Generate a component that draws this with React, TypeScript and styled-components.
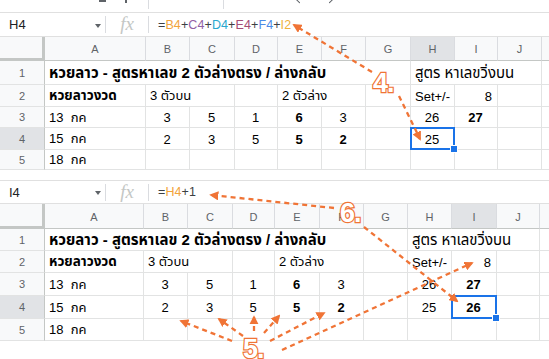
import React from "react";
import styled, { createGlobalStyle } from "styled-components";
import { ArrowLeft, ArrowRight } from "lucide-react";

const GlobalStyle = createGlobalStyle`
  html, body { margin: 0; padding: 0; background: #ffffff; }
  body { font-family: "Liberation Sans", Arial, "Noto Sans Thai", "Noto Sans", sans-serif; }
`;

const ORANGE = "#f07436";
const FONT = `"Liberation Sans", Arial, "Noto Sans Thai", "Noto Sans", sans-serif`;

const Page = styled.div`
  position: relative;
  width: 549px;
  height: 359px;
  overflow: hidden;
  background: #fff;
  display: flex;
  flex-direction: column;
`;

const Toolbar = styled.div`
  height: 12px;
  border-bottom: 1px solid #e0e0e0;
  display: flex;
  align-items: flex-start;
  overflow: hidden;
  color: #5f6368;
  flex: none;
`;

const ToolSlot = styled.div<{ $w: number }>`
  width: ${(p) => p.$w}px;
  flex: none;
  display: flex;
  justify-content: center;
`;

const ToolStub = styled.div<{ $w: number; $h: number }>`
  width: ${(p) => p.$w}px;
  height: ${(p) => p.$h}px;
  background: #5f6368;
`;

const ToolSep = styled.div`
  width: 1px;
  height: 9px;
  background: #dadce0;
  flex: none;
`;

const ToolArrow = styled.div`
  margin-top: -6px;
  display: flex;
`;

const FormulaBar = styled.div<{ $top?: boolean; $h: number }>`
  height: ${(p) => p.$h}px;
  box-sizing: border-box;
  border-top: ${(p) => (p.$top ? "1px solid #e0e0e0" : "none")};
  border-bottom: 1px solid #e0e0e0;
  display: flex;
  align-items: center;
  font-family: ${FONT};
  flex: none;
`;

const NameBox = styled.div`
  width: 105px;
  box-sizing: border-box;
  padding: 0 4px 0 9px;
  display: flex;
  align-items: center;
  justify-content: space-between;
  font-size: 13px;
  color: #202124;
`;

const Caret = styled.span`
  width: 0;
  height: 0;
  border-left: 3.5px solid transparent;
  border-right: 3.5px solid transparent;
  border-top: 4px solid #5f6368;
  margin-top: 2px;
`;

const BarSep = styled.div`
  width: 1px;
  height: 17px;
  background: #dadce0;
  flex: none;
`;

const Fx = styled.div`
  width: 42px;
  text-align: center;
  font-family: "Liberation Serif", "DejaVu Serif", serif;
  font-style: italic;
  font-size: 19px;
  color: #c4c7c5;
  line-height: 1;
  margin-top: -2px;
`;

const FormulaText = styled.div`
  padding-left: 9px;
  font-size: 12.5px;
  color: #3c4043;
  letter-spacing: 0.1px;
`;

const Ref = styled.span<{ $c: string }>`
  color: ${(p) => p.$c};
`;

const Grid = styled.div<{ $cols: string; $rows: string }>`
  display: grid;
  grid-template-columns: ${(p) => p.$cols};
  grid-template-rows: ${(p) => p.$rows};
  font-family: ${FONT};
  flex: none;
`;

const Corner = styled.div`
  background: #f8f9fa;
  box-shadow: inset -3px -3px 0 #c4c7c5;
`;

const ColHead = styled.div<{ $sel?: boolean }>`
  background: ${(p) => (p.$sel ? "#e1e3e6" : "#f8f9fa")};
  border-right: 1px solid #dadce0;
  border-bottom: 1px solid #c4c7c5;
  display: flex;
  align-items: center;
  justify-content: center;
  font-size: 11px;
  color: #5f6368;
  padding-top: 1px;
  box-sizing: border-box;
`;

const RowHead = styled.div<{ $sel?: boolean }>`
  background: ${(p) => (p.$sel ? "#e1e3e6" : "#f8f9fa")};
  border-right: 1px solid #c4c7c5;
  border-bottom: 1px solid #e2e3e3;
  display: flex;
  align-items: center;
  justify-content: center;
  font-size: 11px;
  color: #5f6368;
  box-sizing: border-box;
`;

const Cell = styled.div<{
  $span: number;
  $align: "left" | "center" | "right";
  $bold?: boolean;
  $size: number;
  $sel?: boolean;
}>`
  grid-column: span ${(p) => p.$span};
  position: relative;
  border-right: 1px solid #e2e3e3;
  border-bottom: 1px solid #e2e3e3;
  box-sizing: border-box;
  display: flex;
  align-items: center;
  justify-content: ${(p) =>
    p.$align === "center" ? "center" : p.$align === "right" ? "flex-end" : "flex-start"};
  padding: 1px 5px 0 4px;
  font-size: ${(p) => p.$size}px;
  font-weight: ${(p) => (p.$bold ? 700 : 400)};
  color: #000;
  white-space: pre;
  overflow: visible;
  z-index: ${(p) => (p.$sel ? 2 : 0)};

  ${(p) =>
    p.$sel &&
    `
    &::after {
      content: "";
      position: absolute;
      left: -1px; top: -1px; right: -1px; bottom: -1px;
      border: 2px solid #1a73e8;
    }
    &::before {
      content: "";
      position: absolute;
      right: -4px; bottom: -4px;
      width: 6px; height: 6px;
      background: #1a73e8;
      border: 1px solid #fff;
      z-index: 3;
    }
  `}
`;

const Gap = styled.div`
  height: 10px;
  flex: none;
`;

const Overlay = styled.svg`
  position: absolute;
  left: 0;
  top: 0;
  pointer-events: none;
  z-index: 10;
`;

const Badge = styled.span<{ $x: number; $y: number }>`
  position: absolute;
  left: ${(p) => p.$x}px;
  top: ${(p) => p.$y}px;
  font-family: "Liberation Sans", Arial, sans-serif;
  font-weight: 700;
  font-size: 27px;
  line-height: 27px;
  color: #fff;
  -webkit-text-stroke: 2.4px ${ORANGE};
  paint-order: stroke fill;
  letter-spacing: -1px;
  z-index: 11;
  pointer-events: none;
`;

type CellSpec = {
  t?: string;
  span?: number;
  align?: "left" | "center" | "right";
  bold?: boolean;
  size?: number;
  sel?: boolean;
};

const TITLE = "หวยลาว - สูตรหาเลข 2 ตัวล่างตรง / ล่างกลับ";

const buildRows = (selCol: "H" | "I"): CellSpec[][] => [
  [
    { t: TITLE, span: 7, bold: true, size: 15 },
    { t: "สูตร หาเลขวิ่งบน", span: 3, size: 15 },
    {},
  ],
  [
    { t: "หวยลาวงวด", bold: true, size: 13.5 },
    { t: "3 ตัวบน", span: 2 },
    {},
    { t: "2 ตัวล่าง", span: 2 },
    {},
    { t: "Set+/-" },
    { t: "8", align: "right" },
    {},
    {},
  ],
  [
    { t: "13  กค" },
    { t: "3", align: "center" },
    { t: "5", align: "center" },
    { t: "1", align: "center" },
    { t: "6", align: "center", bold: true },
    { t: "3", align: "center" },
    {},
    { t: "26", align: "center" },
    { t: "27", align: "center", bold: true },
    {},
    {},
  ],
  [
    { t: "15  กค" },
    { t: "2", align: "center" },
    { t: "3", align: "center" },
    { t: "5", align: "center" },
    { t: "5", align: "center", bold: true },
    { t: "2", align: "center", bold: true },
    {},
    { t: "25", align: "center", sel: selCol === "H" },
    selCol === "I"
      ? { t: "26", align: "center", bold: true, sel: true }
      : {},
    {},
    {},
  ],
  [{ t: "18  กค" }, {}, {}, {}, {}, {}, {}, {}, {}, {}, {}],
];

const LETTERS = ["A", "B", "C", "D", "E", "F", "G", "H", "I", "J", ""];

type SheetProps = {
  cols: number[];
  rows: number[];
  selCol: "H" | "I";
};

const Sheet: React.FC<SheetProps> = ({ cols, rows, selCol }) => {
  const data = buildRows(selCol);
  const colTpl = cols.map((c) => `${c}px`).join(" ") + " 1fr";
  const rowTpl = rows.map((r) => `${r}px`).join(" ");
  return (
    <Grid $cols={colTpl} $rows={rowTpl}>
      <Corner />
      {LETTERS.map((l, i) => (
        <ColHead key={`h${i}`} $sel={l === selCol}>
          {l}
        </ColHead>
      ))}
      {data.map((row, ri) => (
        <React.Fragment key={`r${ri}`}>
          <RowHead $sel={ri === 3}>{ri + 1}</RowHead>
          {row.map((c, ci) => (
            <Cell
              key={`c${ri}-${ci}`}
              $span={c.span ?? 1}
              $align={c.align ?? "left"}
              $bold={c.bold}
              $size={c.size ?? 13}
              $sel={c.sel}
            >
              {c.t ?? ""}
            </Cell>
          ))}
        </React.Fragment>
      ))}
    </Grid>
  );
};

const Arrows: React.FC = () => {
  const lines: [number, number, number, number][] = [
    [372, 72, 294, 25],
    [399, 96, 420, 139],
    [334, 208, 211, 195],
    [364, 227, 457, 301],
    [232, 341, 181, 321],
    [243, 336, 219, 319],
    [254, 331, 254, 317],
    [264, 333, 279, 316],
    [270, 341, 324, 313],
    [282, 350, 472, 263],
  ];
  return (
    <Overlay width={549} height={359} viewBox="0 0 549 359">
      <defs>
        <marker
          id="ah"
          viewBox="0 0 10 10"
          refX="8"
          refY="5"
          markerWidth="4"
          markerHeight="4"
          orient="auto"
        >
          <path d="M0,0 L10,5 L0,10 z" fill={ORANGE} />
        </marker>
      </defs>
      {lines.map(([x1, y1, x2, y2], i) => (
        <line
          key={i}
          x1={x1}
          y1={y1}
          x2={x2}
          y2={y2}
          stroke={ORANGE}
          strokeWidth={2.3}
          strokeDasharray="5 4"
          markerEnd="url(#ah)"
        />
      ))}
    </Overlay>
  );
};

export default function App() {
  return (
    <>
      <GlobalStyle />
      <Page>
        <Toolbar>
          <ToolSlot $w={96} />
          <ToolSlot $w={12}>
            <ToolStub $w={7} $h={2} />
          </ToolSlot>
          <ToolSlot $w={14} />
          <ToolSlot $w={8}>
            <ToolStub $w={2} $h={3} />
          </ToolSlot>
          <ToolSlot $w={18} />
          <ToolSep />
          <ToolSlot $w={74} />
          <ToolSep />
          <ToolSlot $w={70} />
          <ToolArrow>
            <ArrowLeft size={11} strokeWidth={2.2} />
          </ToolArrow>
          <ToolSlot $w={19} />
          <ToolArrow>
            <ArrowRight size={11} strokeWidth={2.2} />
          </ToolArrow>
        </Toolbar>
        <FormulaBar $h={24}>
          <NameBox>
            <span>H4</span>
            <Caret />
          </NameBox>
          <BarSep />
          <Fx>fx</Fx>
          <BarSep />
          <FormulaText>
            =<Ref $c="#f2a33a">B4</Ref>+<Ref $c="#9261a6">C4</Ref>+
            <Ref $c="#2aa8cf">D4</Ref>+<Ref $c="#a64c74">E4</Ref>+
            <Ref $c="#4b8ae6">F4</Ref>+<Ref $c="#eeb23a">I2</Ref>
          </FormulaText>
        </FormulaBar>
        <Sheet
          cols={[45, 101, 44, 45, 43, 44, 44, 45, 44, 43, 44]}
          rows={[24, 24, 22, 21, 22, 20]}
          selCol="H"
        />
        <Gap />
        <FormulaBar $top $h={24}>
          <NameBox>
            <span>I4</span>
            <Caret />
          </NameBox>
          <BarSep />
          <Fx>fx</Fx>
          <BarSep />
          <FormulaText>
            =<Ref $c="#f2a33a">H4</Ref>+1
          </FormulaText>
        </FormulaBar>
        <Sheet
          cols={[45, 99, 44, 45, 42, 45, 44, 44, 44, 45, 43]}
          rows={[25, 22, 22, 23, 23, 22]}
          selCol="I"
        />
        <Arrows />
        <Badge $x={373} $y={70}>4.</Badge>
        <Badge $x={340} $y={200}>6.</Badge>
        <Badge $x={243} $y={336}>5.</Badge>
      </Page>
    </>
  );
}
